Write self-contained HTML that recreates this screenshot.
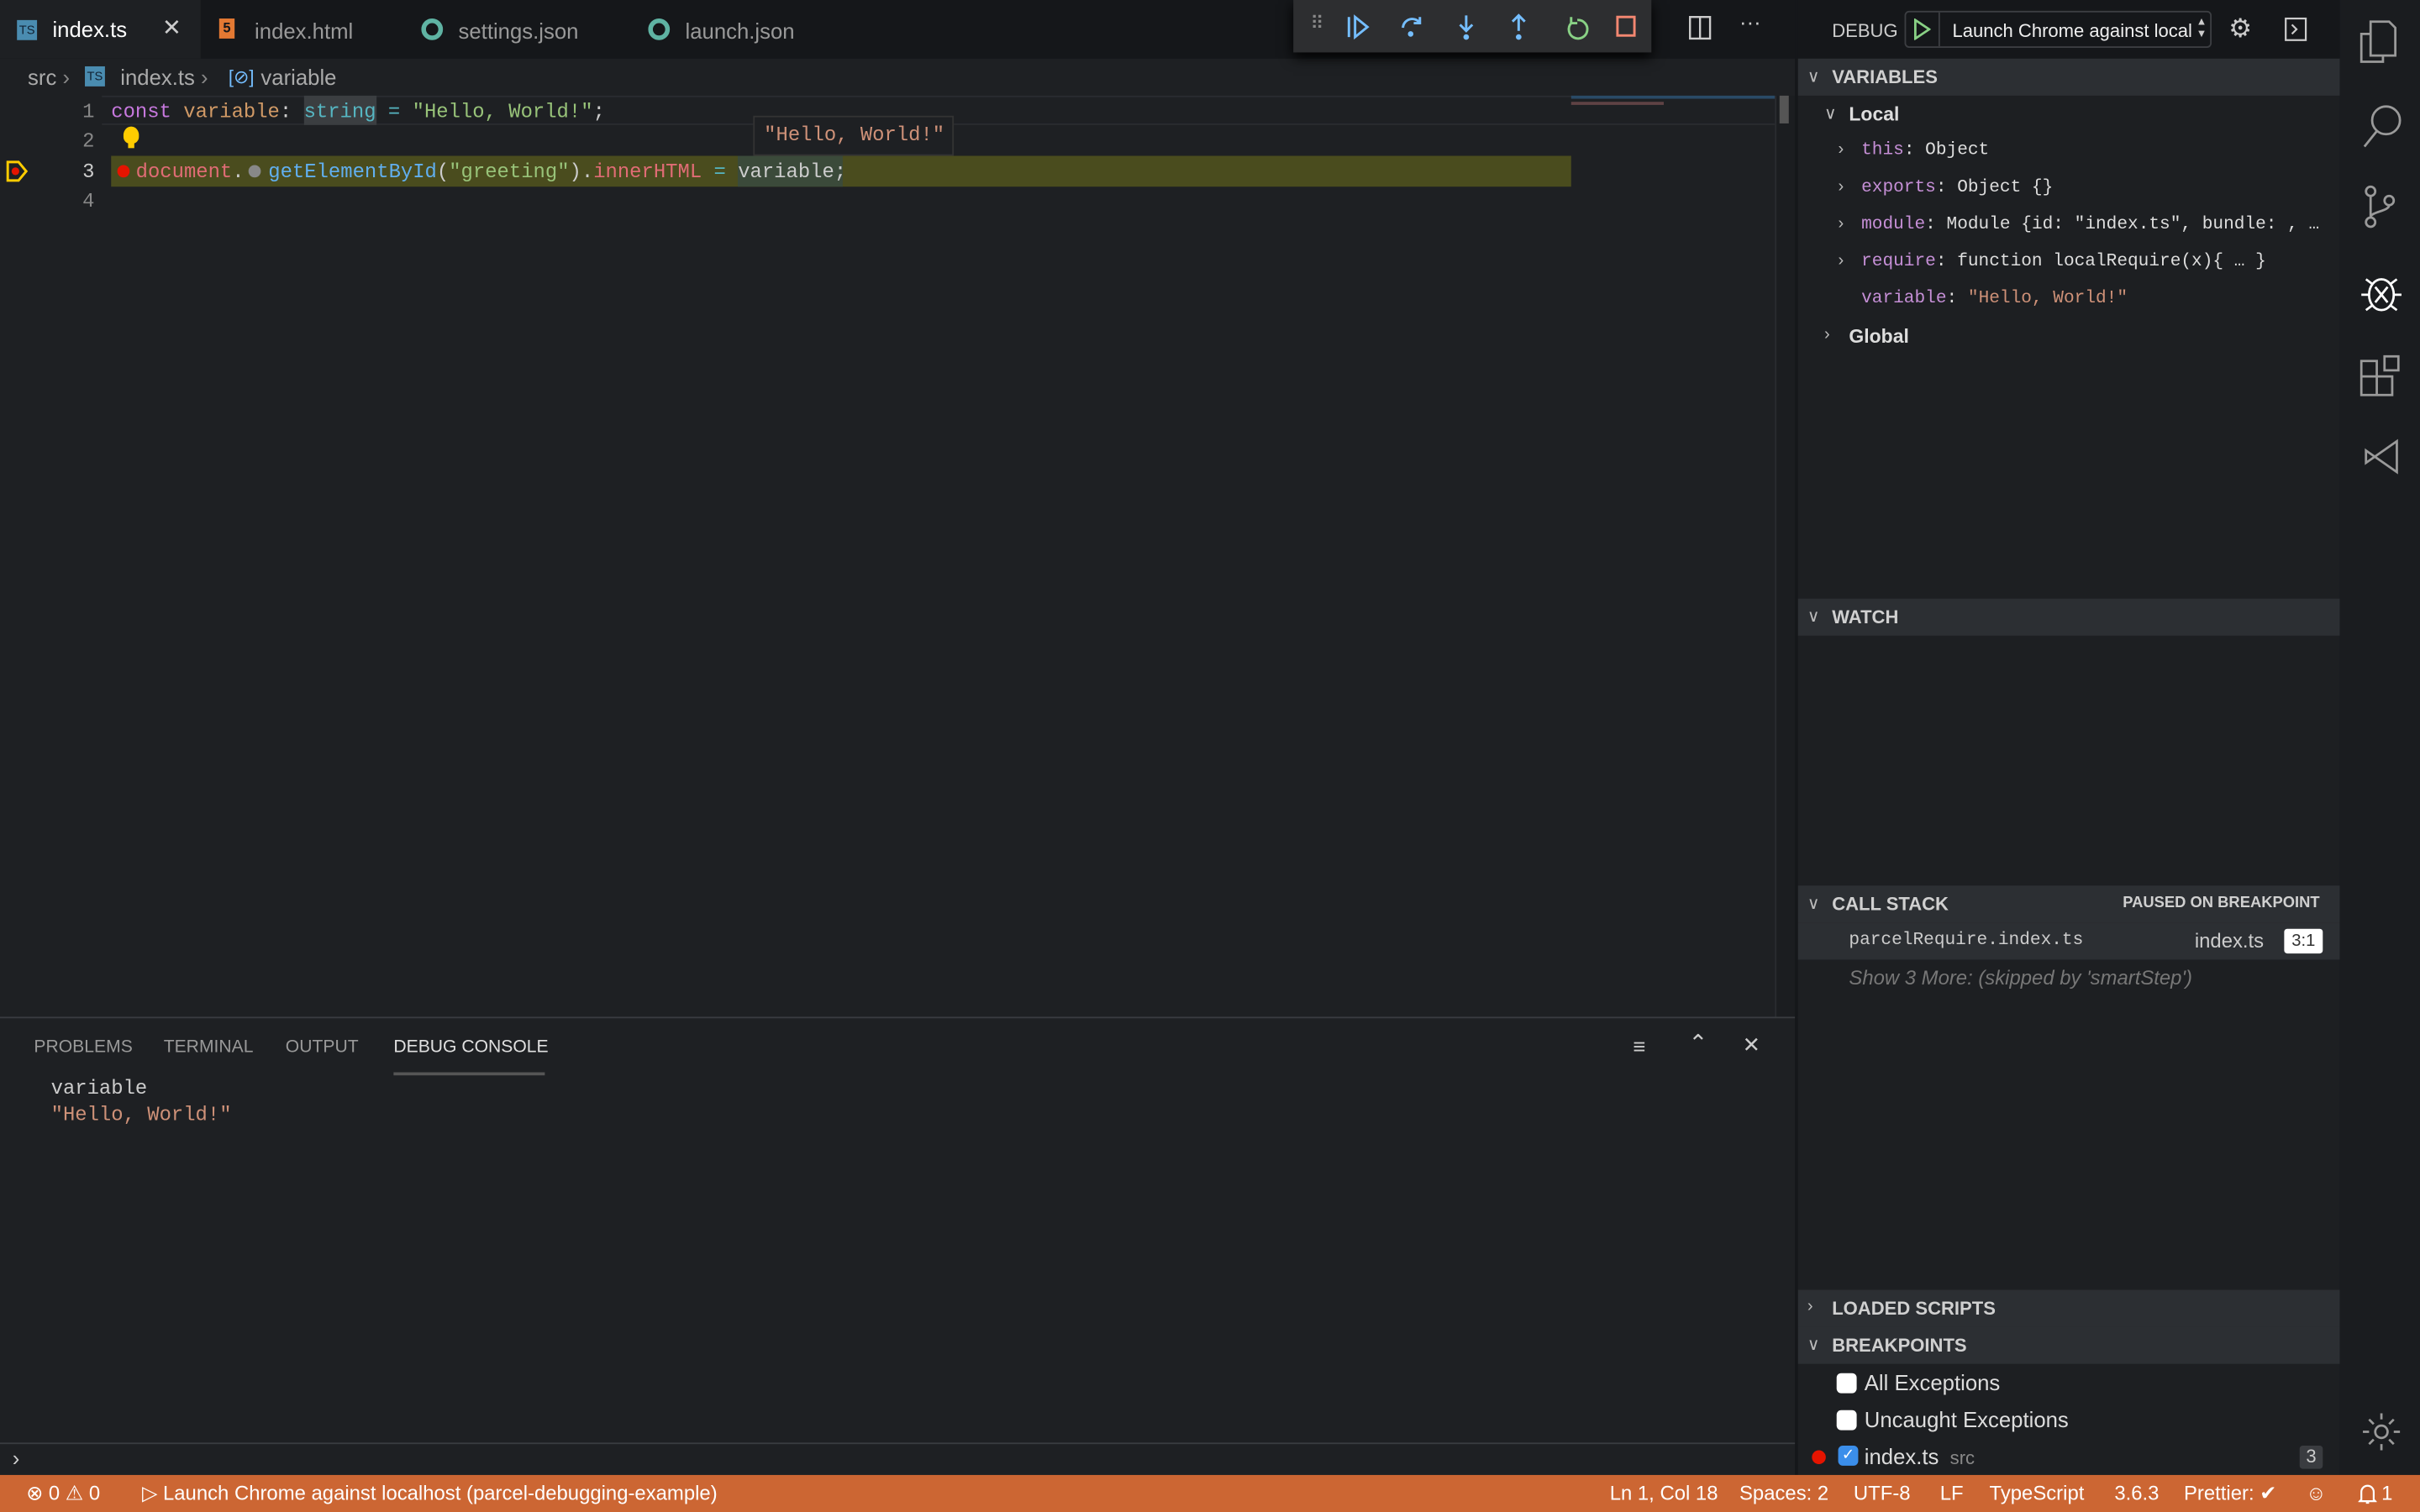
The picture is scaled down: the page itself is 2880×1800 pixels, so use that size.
<!DOCTYPE html>
<html><head><meta charset="utf-8"><style>
*{margin:0;padding:0;box-sizing:border-box}
html,body{width:2880px;height:1800px;overflow:hidden;background:#1e2023}
#w{width:1568px;height:980px;position:relative;overflow:hidden;transform:scale(1.836735);transform-origin:0 0;font-family:"Liberation Sans",sans-serif;color:#ccc;font-size:13px;background:#1e2023}
.a{position:absolute}
.m{font-family:"Liberation Mono","DejaVu Sans Mono",monospace;font-size:13px;white-space:pre}
.sm{font-size:11.5px}
.sh{position:absolute;left:1165px;width:351px;height:24px;background:#2c2f33;font-weight:bold;font-size:12px;color:#d0d0d0;line-height:24px;padding-left:22px}
.row{position:absolute;height:24px;line-height:24px;white-space:pre}
.chev{position:absolute;font-size:11px;color:#bbb}
.pk{color:#c678dd}.or{color:#d19a66}.cy{color:#56b6c2}.gr{color:#98c379}.rd{color:#e06c75}.bl{color:#61afef}.pur{color:#c58fd6}.str{color:#ce9178}
.sb{position:absolute;top:0;white-space:pre}
</style></head><body><div id="w">
<!-- tab bar -->
<div class="a" style="left:0;top:0;width:1165px;height:38px;background:#15171a"></div>
<div class="a" style="left:0;top:0;width:130px;height:38px;background:#1e2023"></div>
<div class="a" style="left:11px;top:13px;width:13px;height:13px;background:#4a8cb0;color:#123;font-size:8px;line-height:14px;text-align:center">TS</div>
<div class="a" style="left:34px;top:11px;font-size:14px;color:#fff">index.ts</div>
<div class="a" style="left:105px;top:9px;font-size:15px;color:#ccc">✕</div>
<div class="a" style="left:142px;top:12px;width:10px;height:13px;background:#e37933;color:#15171a;font-size:9px;text-align:center;line-height:13px;font-weight:bold">5</div>
<div class="a" style="left:165px;top:12px;font-size:14px;color:#999">index.html</div>
<div class="a" style="left:273px;top:12px;width:14px;height:14px;border:3px solid #5fb3a3;border-radius:50%"></div>
<div class="a" style="left:297px;top:12px;font-size:14px;color:#999">settings.json</div>
<div class="a" style="left:420px;top:12px;width:14px;height:14px;border:3px solid #5fb3a3;border-radius:50%"></div>
<div class="a" style="left:444px;top:12px;font-size:14px;color:#999">launch.json</div>
<!-- debug toolbar -->
<div class="a" style="left:838px;top:0;width:232px;height:34px;background:#2d2e30;box-shadow:0 3px 8px #000"></div>
<div class="a" style="left:849px;top:8px;color:#888;font-size:12px;letter-spacing:-1px">⠿</div>
<svg class="a" style="left:870px;top:8px" width="190" height="20" viewBox="0 0 190 20" fill="none" stroke-width="1.6">
<path d="M4 3v13M8 3l8 6.5-8 6.5z" stroke="#75beff"/>
<path d="M39 10a6 6 0 0 1 11-3M50 3v4h-4" stroke="#75beff"/><circle cx="44" cy="14" r="1.8" fill="#75beff"/>
<path d="M80 2v10M76 8l4 4 4-4" stroke="#75beff"/><circle cx="80" cy="16" r="1.8" fill="#75beff"/>
<path d="M114 12V2M110 6l4-4 4 4" stroke="#75beff"/><circle cx="114" cy="16" r="1.8" fill="#75beff"/>
<path d="M152 5a6 6 0 1 1-4 2M148 3v4h4" stroke="#89d185"/>
<rect x="178" y="3" width="11" height="12" stroke="#f48771"/>
</svg>
<svg class="a" style="left:1094px;top:10px" width="16" height="16" fill="none" stroke="#ccc" stroke-width="1.3"><rect x="1" y="1" width="13" height="14"/><path d="M7.5 1v14"/></svg>
<div class="a" style="left:1127px;top:6px;color:#ccc;font-size:14px">···</div>
<!-- breadcrumbs -->
<div class="a" style="left:18px;top:42px;font-size:14px;color:#aaa">src <span style="color:#888">›</span></div>
<div class="a" style="left:55px;top:43px;width:13px;height:13px;background:#4a8cb0;color:#123;font-size:8px;line-height:14px;text-align:center">TS</div>
<div class="a" style="left:78px;top:42px;font-size:14px;color:#aaa">index.ts <span style="color:#888">›</span></div>
<div class="a" style="left:148px;top:43px;font-size:12px;color:#75beff">[⊘]</div>
<div class="a" style="left:169px;top:42px;font-size:14px;color:#aaa">variable</div>
<!-- editor -->
<div class="a" style="left:66px;top:62px;width:1084px;height:19px;border-top:1px solid #2a2c30;border-bottom:1px solid #2a2c30"></div>
<div class="a" style="left:72px;top:101px;width:946px;height:20px;background:#4a4c1e"></div>
<div class="a" style="left:197px;top:62px;width:47px;height:19px;background:#3b3e41"></div>
<div class="a" style="left:478px;top:101px;width:68px;height:20px;background:#3b4a3a"></div>
<div class="a m" style="left:30px;top:65px;color:#888">   1</div>
<div class="a m" style="left:30px;top:84px;color:#888">   2</div>
<div class="a m" style="left:30px;top:104px;color:#ccc">   3</div>
<div class="a m" style="left:30px;top:123px;color:#888">   4</div>
<svg class="a" style="left:3px;top:103px" width="16" height="16"><path d="M2 2h7l5 6-5 6H2z" fill="none" stroke="#ffcc00" stroke-width="1.6"/><circle cx="7" cy="8" r="2.5" fill="#e51400"/></svg>
<div class="a m" style="left:72px;top:65px"><span class="pk">const</span> <span class="or">variable</span>: <span class="cy">string</span> <span class="cy">=</span> <span class="gr">"Hello, World!"</span>;</div>
<div class="a" style="left:80px;top:82px;width:10px;height:11px;background:#ffcc00;border-radius:50% 50% 40% 40%"></div>
<div class="a" style="left:83px;top:92px;width:4px;height:4px;background:#ffcc00"></div>
<div class="a" style="left:76px;top:107px;width:8px;height:8px;border-radius:50%;background:#e51400"></div>
<div class="a" style="left:161px;top:107px;width:8px;height:8px;border-radius:50%;background:#888"></div>
<div class="a m" style="left:88px;top:104px"><span class="rd">document</span>.  <span class="bl">getElementById</span>(<span class="gr">"greeting"</span>).<span class="rd">innerHTML</span> <span class="cy">=</span> variable;</div>
<div class="a m" style="left:488px;top:75px;width:130px;height:26px;padding:4px 6px;background:#1e2023;border:1px solid #333;color:#ce9178;font-size:13px">"Hello, World!"</div>
<!-- minimap -->
<div class="a" style="left:1018px;top:62px;width:132px;height:2px;background:#2a4a66"></div>
<div class="a" style="left:1018px;top:66px;width:60px;height:2px;background:#8a5a5a;opacity:.6"></div>
<div class="a" style="left:1150px;top:62px;width:13px;height:598px;background:#1b1d20;border-left:1px solid #2a2c30"></div>
<div class="a" style="left:1153px;top:62px;width:6px;height:18px;background:#555"></div>
<!-- panel -->
<div class="a" style="left:0;top:659px;width:1165px;height:1px;background:#3a3c40"></div>
<div class="a" style="left:22px;top:673px;font-size:11.5px;color:#999">PROBLEMS</div>
<div class="a" style="left:106px;top:673px;font-size:11.5px;color:#999">TERMINAL</div>
<div class="a" style="left:185px;top:673px;font-size:11.5px;color:#999">OUTPUT</div>
<div class="a" style="left:255px;top:673px;font-size:11.5px;color:#e0e0e0">DEBUG CONSOLE</div>
<div class="a" style="left:255px;top:695px;width:98px;height:2px;background:#555"></div>
<div class="a" style="left:1058px;top:670px;font-size:14px;color:#ccc">≡</div>
<div class="a" style="left:1094px;top:667px;font-size:15px;color:#ccc">⌃</div>
<div class="a" style="left:1129px;top:669px;font-size:14px;color:#ccc">✕</div>
<div class="a m" style="left:33px;top:698px;color:#ccc">variable</div>
<div class="a m" style="left:33px;top:715px;color:#ce9178">"Hello, World!"</div>
<div class="a" style="left:0;top:935px;width:1165px;height:1px;background:#3a3c40"></div>
<div class="a" style="left:8px;top:937px;color:#ccc;font-size:14px">›</div>
<!-- sidebar -->
<div class="a" style="left:1163px;top:0;width:2px;height:956px;background:#15171a"></div>
<div class="a" style="left:1165px;top:0;width:351px;height:38px;background:#15171a"></div>
<div class="a" style="left:1187px;top:13px;font-size:12px;color:#ccc">DEBUG</div>
<div class="a" style="left:1234px;top:7px;width:199px;height:24px;border:1px solid #3c3e42;border-radius:3px"></div>
<svg class="a" style="left:1239px;top:12px" width="12" height="14"><path d="M2 1l9 6-9 6z" fill="none" stroke="#89d185" stroke-width="1.5"/></svg>
<div class="a" style="left:1256px;top:8px;width:1px;height:22px;background:#3c3e42"></div>
<div class="a" style="left:1265px;top:13px;font-size:12px;color:#eee;white-space:nowrap">Launch Chrome against local</div>
<div class="a" style="left:1423px;top:11px;font-size:7px;color:#ccc;line-height:8px">▲<br>▼</div>
<div class="a" style="left:1444px;top:9px;font-size:17px;color:#ccc">⚙</div>
<svg class="a" style="left:1480px;top:11px" width="16" height="16" fill="none" stroke="#ccc" stroke-width="1.2"><rect x="1" y="1" width="13" height="14"/><path d="M5 5l3 3-3 3"/></svg>
<div class="a" style="left:1165px;top:38px;width:351px;height:918px;background:#1d1f22"></div>
<div class="sh" style="top:38px">VARIABLES</div><div class="chev" style="left:1171px;top:43px">∨</div>
<div class="row" style="left:1198px;top:62px;font-weight:bold;font-size:12.5px;color:#ddd">Local</div><div class="chev" style="left:1182px;top:67px">∨</div>
<div class="row m sm" style="left:1206px;top:86px;color:#ddd"><span class="pur">this</span>: Object</div><div class="chev" style="left:1191px;top:91px">›</div>
<div class="row m sm" style="left:1206px;top:110px;color:#ddd"><span class="pur">exports</span>: Object {}</div><div class="chev" style="left:1191px;top:115px">›</div>
<div class="row m sm" style="left:1206px;top:134px;color:#ddd;width:310px;overflow:hidden"><span class="pur">module</span>: Module {id: "index.ts", bundle: , …</div><div class="chev" style="left:1191px;top:139px">›</div>
<div class="row m sm" style="left:1206px;top:158px;color:#ddd"><span class="pur">require</span>: function localRequire(x){ … }</div><div class="chev" style="left:1191px;top:163px">›</div>
<div class="row m sm" style="left:1206px;top:182px;color:#ddd"><span class="pur">variable</span>: <span class="str">"Hello, World!"</span></div>
<div class="row" style="left:1198px;top:206px;font-weight:bold;font-size:12.5px;color:#ddd">Global</div><div class="chev" style="left:1182px;top:211px">›</div>
<div class="sh" style="top:388px">WATCH</div><div class="chev" style="left:1171px;top:393px">∨</div>
<div class="sh" style="top:574px">CALL STACK<span style="position:absolute;right:13px;font-size:10px">PAUSED ON BREAKPOINT</span></div><div class="chev" style="left:1171px;top:579px">∨</div>
<div class="a" style="left:1165px;top:598px;width:351px;height:24px;background:#2c2f33"></div>
<div class="row m sm" style="left:1198px;top:598px;color:#ccc">parcelRequire.index.ts</div>
<div class="row" style="left:1422px;top:598px;font-size:13px;color:#ccc">index.ts</div>
<div class="a" style="left:1480px;top:602px;width:25px;height:16px;background:#fff;color:#333;font-size:11px;text-align:center;line-height:16px;border-radius:2px">3:1</div>
<div class="row" style="left:1198px;top:622px;font-style:italic;color:#777;font-size:13px">Show 3 More: (skipped by 'smartStep')</div>
<div class="sh" style="top:836px">LOADED SCRIPTS</div><div class="chev" style="left:1171px;top:841px">›</div>
<div class="sh" style="top:860px">BREAKPOINTS</div><div class="chev" style="left:1171px;top:865px">∨</div>
<div class="a" style="left:1190px;top:890px;width:13px;height:13px;background:#fff;border-radius:3px"></div>
<div class="row" style="left:1208px;top:884px;font-size:14px;color:#ddd">All Exceptions</div>
<div class="a" style="left:1190px;top:914px;width:13px;height:13px;background:#fff;border-radius:3px"></div>
<div class="row" style="left:1208px;top:908px;font-size:14px;color:#ddd">Uncaught Exceptions</div>
<div class="a" style="left:1174px;top:940px;width:9px;height:9px;border-radius:50%;background:#e51400"></div>
<div class="a" style="left:1191px;top:937px;width:13px;height:13px;background:#3b8eea;border-radius:3px;color:#fff;font-size:10px;text-align:center;line-height:13px">✓</div>
<div class="row" style="left:1208px;top:932px;font-size:14px;color:#ddd">index.ts <span style="font-size:12px;color:#888">&nbsp;src</span></div>
<div class="a" style="left:1490px;top:937px;width:15px;height:15px;background:#3a3c40;color:#ccc;font-size:12px;text-align:center;line-height:15px;border-radius:2px">3</div>
<!-- activity bar -->
<div class="a" style="left:1516px;top:0;width:52px;height:956px;background:#1a1c1f"></div>
<svg class="a" style="left:1516px;top:0" width="52" height="956" fill="none" stroke="#9a9a9a" stroke-width="1.5">
<path d="M20 22h-6v18h14v-4M20 14h12l4 4v18H20z"/>
<circle cx="30" cy="78" r="9"/><path d="M24 85l-8 10"/>
<circle cx="20" cy="124" r="3"/><circle cx="32" cy="130" r="3"/><circle cx="20" cy="144" r="3"/><path d="M20 127v14M32 133c0 4-12 4-12 8"/>
<g stroke="#fff"><ellipse cx="27" cy="191" rx="8" ry="10"/><path d="M23 186l8 10M31 186l-8 10M14 191h5M35 191h5M17 181l4 3M37 181l-4 3M17 201l4-3M37 201l-4-3"/></g>
<path d="M14 244h10v12H14zM24 244h10v12H24zM14 234h10v10H14zM29 231h9v9h-9z"/>
<path d="M17 292l20 14V286L17 300zM17 292v8"/>
<circle cx="27" cy="928" r="4"/><path d="M27 916v4M27 936v4M15 928h4M35 928h4M19 920l3 3M35 920l-3 3M19 936l3-3M35 936l-3-3"/>
</svg>
<!-- status bar -->
<div class="a" style="left:0;top:956px;width:1568px;height:24px;background:#cc6633;color:#fff;font-size:13px;line-height:24px"><span class="sb" style="left:17px">⊗ 0 ⚠ 0</span><span class="sb" style="left:92px">▷ Launch Chrome against localhost (parcel-debugging-example)</span><span class="sb" style="left:1043px">Ln 1, Col 18</span><span class="sb" style="left:1127px">Spaces: 2</span><span class="sb" style="left:1201px">UTF-8</span><span class="sb" style="left:1257px">LF</span><span class="sb" style="left:1289px">TypeScript</span><span class="sb" style="left:1370px">3.6.3</span><span class="sb" style="left:1415px">Prettier: ✔</span><span class="sb" style="left:1494px">☺</span><svg class="sb" style="left:1528px;top:5px" width="12" height="14" fill="none" stroke="#fff" stroke-width="1.2"><path d="M2 11V6a4 4 0 0 1 8 0v5l1 1H1zM5 13h2"/></svg><span class="sb" style="left:1543px">1</span></div>
</div></body></html>
